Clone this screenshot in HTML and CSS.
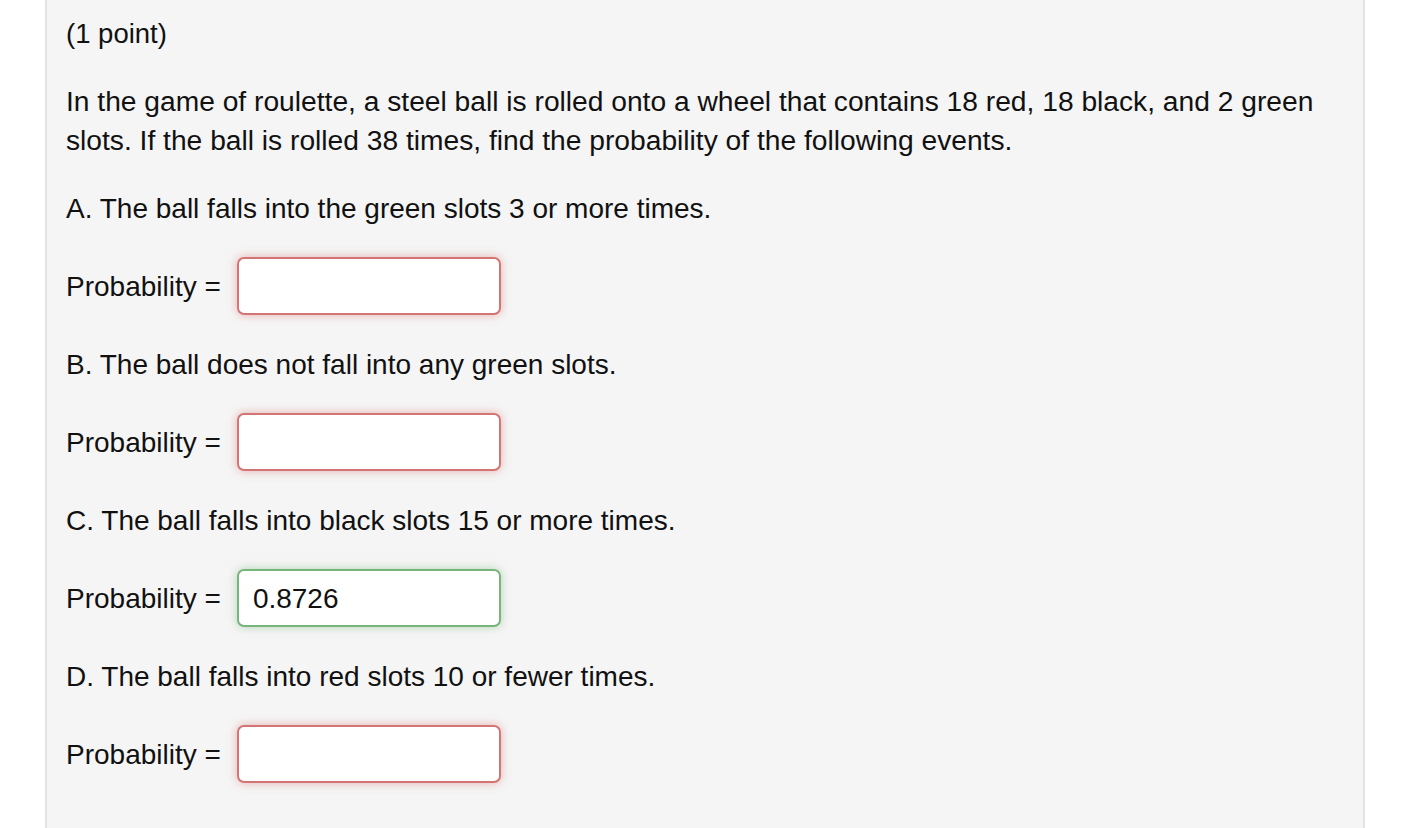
FILE: index.html
```html
<!DOCTYPE html>
<html>
<head>
<meta charset="utf-8">
<link rel="stylesheet" href="styles.css">
</head>
<body>
<div class="panel">
  <p class="pts">(1 point)</p>
  <p class="intro">In the game of roulette, a steel ball is rolled onto a wheel that contains 18 red, 18 black, and 2 green slots. If the ball is rolled 38 times, find the probability of the following events.</p>
  <p>A. The ball falls into the green slots 3 or more times.</p>
  <div class="row"><span class="lbl">Probability =</span><span class="inp bad"></span></div>
  <p>B. The ball does not fall into any green slots.</p>
  <div class="row"><span class="lbl">Probability =</span><span class="inp bad"></span></div>
  <p>C. The ball falls into black slots 15 or more times.</p>
  <div class="row"><span class="lbl">Probability =</span><span class="inp good">0.8726</span></div>
  <p>D. The ball falls into red slots 10 or fewer times.</p>
  <div class="row"><span class="lbl">Probability =</span><span class="inp bad"></span></div>
</div>
</body>
</html>
```
FILE: styles.css
```css
html, body {
  margin: 0;
  padding: 0;
  background: #ffffff;
}
body {
  font-family: "Liberation Sans", Arial, sans-serif;
  font-size: 28px;
  line-height: 39px;
  color: #111;
  overflow: hidden;
  height: 828px;
}
.panel {
  margin: 0 54px 0 45px;
  background: #f5f5f5;
  border-left: 2px solid #e3e3e3;
  border-right: 2px solid #e3e3e3;
  padding: 14px 19px 40px 19px;
  min-height: 900px;
}
p {
  margin: 0 0 29px 0;
}
.pts {
  font-size: 27.5px;
}
.intro {
  font-size: 28.2px;
}
.row {
  display: flex;
  align-items: center;
  gap: 16px;
  margin: 0 0 30px 0;
  height: 58px;
}
.inp {
  box-sizing: border-box;
  width: 264px;
  height: 58px;
  background: #fff;
  border-radius: 7px;
  padding: 0 14px;
  display: flex;
  align-items: center;
}
.bad {
  border: 2px solid #d37575;
  box-shadow: 0 0 10px rgba(220, 110, 110, 0.5);
}
.good {
  border: 2px solid #78b57b;
  box-shadow: 0 0 10px rgba(120, 180, 120, 0.5);
}
```
